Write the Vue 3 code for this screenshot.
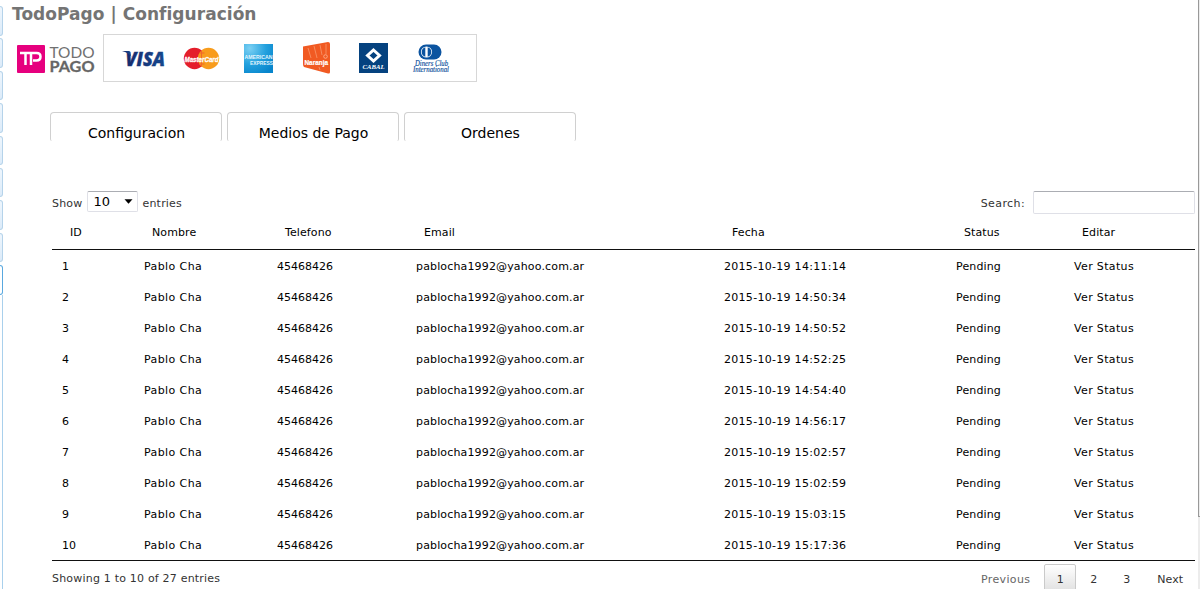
<script setup>
const tabs = ['Configuracion', 'Medios de Pago', 'Ordenes']
const columns = ['ID', 'Nombre', 'Telefono', 'Email', 'Fecha', 'Status', 'Editar']
const times = ['14:11:14', '14:50:34', '14:50:52', '14:52:25', '14:54:40', '14:56:17', '15:02:57', '15:02:59', '15:03:15', '15:17:36']
const rows = times.map((t, i) => [i + 1, 'Pablo Cha', '45468426', 'pablocha1992@yahoo.com.ar', '2015-10-19 ' + t, 'Pending', 'Ver Status'])
</script>

<template>
  <div class="page">
    <aside class="side">
      <i v-for="n in 8" :key="n" class="side-item"></i>
      <i class="side-item active"></i>
      <i class="side-line"></i>
    </aside>

    <main class="main">
      <h1>TodoPago | Configuración</h1>

      <div class="brands">
        <svg class="logo" width="80" height="36" viewBox="0 -4 80 36">
          <rect x="1" y="2" width="28" height="28" rx="1" fill="#e6007e" />
          <path d="M4 10H17M9.500 10V22M15 22V10H20.500Q24.500 10 24.500 13.700T20.500 17.400H17" fill="none" stroke="#fff" stroke-width="2.500" />
          <text x="33.500" y="14.500" textLength="45" lengthAdjust="spacingAndGlyphs" font-size="16" fill="#707070" font-family="Lato" font-weight="400">TODO</text>
          <text x="33.500" y="28.800" textLength="45" lengthAdjust="spacingAndGlyphs" font-size="16" fill="#666" font-family="Lato" font-weight="700" stroke="#666" stroke-width=".3">PAGO</text>
        </svg>
        <div class="cards">
          <svg width="372" height="46" viewBox="104 35 372 46">
            <defs>
              <radialGradient id="amex" cx=".2" cy=".15" r="1">
                <stop offset="0" stop-color="#7bd0f3" /><stop offset=".55" stop-color="#24a1de" /><stop offset="1" stop-color="#0785cc" />
              </radialGradient>
              <linearGradient id="visa" x1="0" x2="1">
                <stop offset="0" stop-color="#17296b" /><stop offset="1" stop-color="#154a91" />
              </linearGradient>
            </defs>
            <g fill="url(#visa)">
              <text x="125.500" y="65.500" textLength="39.500" lengthAdjust="spacingAndGlyphs" font-family="Open Sans" font-size="20" font-weight="800" font-style="italic" stroke="#17387c" stroke-width=".4">VISA</text>
              <path d="M122 51h7.500l2 6q-3-4.500-9.500-6z" />
            </g>
            <circle cx="194.500" cy="58.500" r="10.700" fill="#e41e2b" />
            <circle cx="208.500" cy="58.500" r="10.700" fill="#f89c1c" />
            <path d="M201.500 50.300v16.400M199.500 53h5M199.500 64h5" stroke="#f0672a" stroke-width="1" />
            <text x="184.500" y="62" textLength="34" lengthAdjust="spacingAndGlyphs" font-family="Liberation Sans" font-size="8" font-weight="700" font-style="italic" fill="#fff" stroke="#fff" stroke-width=".3">MasterCard</text>
            <rect x="244" y="44" width="29" height="29" fill="url(#amex)" />
            <g font-family="Liberation Sans" font-size="5.500" font-weight="700" fill="#e2f5fd">
              <text x="244.500" y="58.600" textLength="28" lengthAdjust="spacingAndGlyphs">AMERICAN</text>
              <text x="250" y="64.900" textLength="23" lengthAdjust="spacingAndGlyphs">EXPRESS</text>
            </g>
            <path d="M303 46.500L328 42Q330 42 330 44V72Q330 74 328 73.500L304 67Q303 66 303 64Z" fill="#f15a22" />
            <path d="M308 48L311 58M314 46L317 58M320 45L322 55M326 44V54M319 67L320 70" stroke="#f78b5d" stroke-width="1" fill="none" />
            <circle cx="325.500" cy="56.500" r="1.800" fill="none" stroke="#ffc0a0" stroke-width=".7" />
            <text x="304.500" y="65.300" textLength="23.500" lengthAdjust="spacingAndGlyphs" font-family="Liberation Sans" font-size="7" font-weight="700" fill="#fff" stroke="#fff" stroke-width=".2">Naranja</text>
            <rect x="359" y="43" width="29" height="30" fill="#05427f" />
            <path d="M373.500 50L379.500 55.500L373.500 61L367.500 55.500Z" fill="none" stroke="#fff" stroke-width="3" />
            <text x="362.500" y="69.300" textLength="22" lengthAdjust="spacingAndGlyphs" font-family="Liberation Serif" font-size="6.800" font-weight="700" font-style="italic" fill="#fff">CABAL</text>
            <rect x="418.500" y="44.500" width="23" height="15" rx="7.500" fill="#0b54a0" />
            <circle cx="426.500" cy="52" r="5.600" fill="#fff" />
            <path d="M425.300 47.200a5 5 0 0 0 0 9.600zM427.700 47.200a5 5 0 0 1 0 9.600z" fill="#0b54a0" />
            <g font-family="'Liberation Serif'" font-size="7.200" font-style="italic" fill="#0d4f9c" stroke="#0d4f9c" stroke-width=".15">
              <text x="415" y="66" textLength="33" lengthAdjust="spacingAndGlyphs">Diners Club</text>
              <text x="413" y="72.300" textLength="36" lengthAdjust="spacingAndGlyphs">International</text>
            </g>
          </svg>
        </div>
      </div>

      <nav class="tabs">
        <div v-for="t in tabs" :key="t" class="tab"><span>{{ t }}</span></div>
      </nav>

      <section class="data">
        <div class="controls">
          <div class="length">
            <span>Show</span>
            <span class="select">10<svg width="9" height="5" viewBox="0 0 9 5"><path d="M.5 .3h8L4.500 4.700z" fill="#000" /></svg></span>
            <span>entries</span>
          </div>
          <label class="search"><span>Search:</span><input type="text" /></label>
        </div>

        <table>
          <colgroup>
            <col class="c1" /><col class="c2" /><col class="c3" /><col class="c4" /><col class="c5" /><col class="c6" /><col />
          </colgroup>
          <thead><tr><th v-for="c in columns" :key="c">{{ c }}</th></tr></thead>
          <tbody>
            <tr v-for="r in rows" :key="r[0]"><td v-for="(v, i) in r" :key="i" :class="'v' + i">{{ v }}</td></tr>
          </tbody>
        </table>

        <footer>
          <span class="info">Showing 1 to 10 of 27 entries</span>
          <div class="pager">
            <span class="prev">Previous</span><span class="page-no current">1</span><span class="page-no">2</span><span class="page-no">3</span><span class="next">Next</span>
          </div>
        </footer>
      </section>
    </main>
    <div class="scroll"><i></i></div>
  </div>
</template>

<style>
body { background: #fff; overflow: hidden; }
</style>

<style scoped>
* { box-sizing: border-box; }
.page { display: flex; width: 1200px; height: 589px; overflow: hidden; font-family: Verdana, "DejaVu Sans", sans-serif; font-size: 11px; color: #333; }
.side { width: 3px; flex: none; padding-top: 6px; display: flex; flex-direction: column; }
.side-item { flex: none; height: 29.500px; margin-bottom: 2.900px; border: 1px solid #b5d3ea; border-left: 0; border-radius: 0 4px 4px 0; background: linear-gradient(#eef6fd, #dcebf9); }
.side-item.active { height: 30px; margin-bottom: 0; border-color: #59a8df; background: #fff; }
.side-line { flex: 1; border-right: 1px solid #a9d0ec; }
.main { flex: none; width: 1192px; }
h1 { margin: 0 0 0 9px; height: 34px; line-height: 28px; font-size: 17px; color: #747474; white-space: nowrap; letter-spacing: 0.04px; }
.brands { display: flex; margin-left: 13px; height: 48px; }
.logo { margin-top: 5px; flex: none; }
.cards { margin-left: 7px; width: 374px; height: 48px; border: 1px solid #d7d7d7; }
.cards svg { display: block; }
.tabs { display: flex; gap: 5px; margin: 30px 0 0 47px; }
.tab { width: 172px; height: 29px; padding-left: 1px; border: 1px solid #d0d0d0; border-bottom: 0; border-radius: 4px 4px 2px 2px; color: #000; font-size: 14px; line-height: 40px; text-align: center; }
.data { margin: 48px 0 0 49px; width: 1143px; }
.controls { display: flex; justify-content: space-between; height: 27px; padding-top: 1px; }
.length { display: flex; align-items: flex-start; line-height: 27px; letter-spacing: .2px; }
.select { display: flex; align-items: center; justify-content: space-between; width: 51px; height: 21px; margin: 1px 4px 0 5px; padding: 0 4px 0 5px; border: 1px solid #dfe0e7; border-top-color: #abadb3; border-radius: 2px; font-size: 13px; letter-spacing: 0; color: #000; line-height: 21px; }
.search { display: flex; line-height: 28px; letter-spacing: .4px; }
.search input { width: 162px; height: 23px; margin: 1px 0 0 8px; padding: 0; border: 1px solid #dfe0e7; border-top-color: #abadb3; border-radius: 2px; background: #fff; }
table { width: 1143px; table-layout: fixed; border-collapse: separate; border-spacing: 0; border-bottom: 1px solid #111; color: #000; }
.c1 { width: 82px; } .c2 { width: 133px; } .c3 { width: 139px; } .c4 { width: 308px; } .c5 { width: 232px; } .c6 { width: 118px; }
th { height: 34px; padding: 0 18px; border-bottom: 1px solid #111; text-align: left; font-weight: 400; white-space: nowrap; letter-spacing: .1px; }
td { height: 31px; padding: 1px 10px 0; white-space: nowrap; }
.v1 { letter-spacing: .4px; }
.v3 { letter-spacing: .15px; }
.v4 { letter-spacing: .29px; }
.v5 { letter-spacing: .14px; }
.v6 { letter-spacing: .35px; }
footer { display: flex; justify-content: space-between; }
.info { line-height: 35px; letter-spacing: .2px; }
.pager { display: flex; margin-top: 3px; line-height: 31px; }
.prev { color: #666; margin-right: 14px; letter-spacing: .35px; }
.page-no { width: 33px; text-align: center; height: 29px; }
.current { width: 32px; margin-right: 1px; border: 1px solid #cacaca; background: linear-gradient(#fff, #dcdcdc 30px); line-height: 29px; border-radius: 2px; }
.next { margin-left: 14px; margin-right: 12px; }
.scroll { flex: none; width: 2px; margin-left: 3px; background: #ececec; }
.scroll i { display: block; height: 517px; background: #ececec; border-left: 1px solid #999; border-bottom: 1px solid #999; }
</style>
